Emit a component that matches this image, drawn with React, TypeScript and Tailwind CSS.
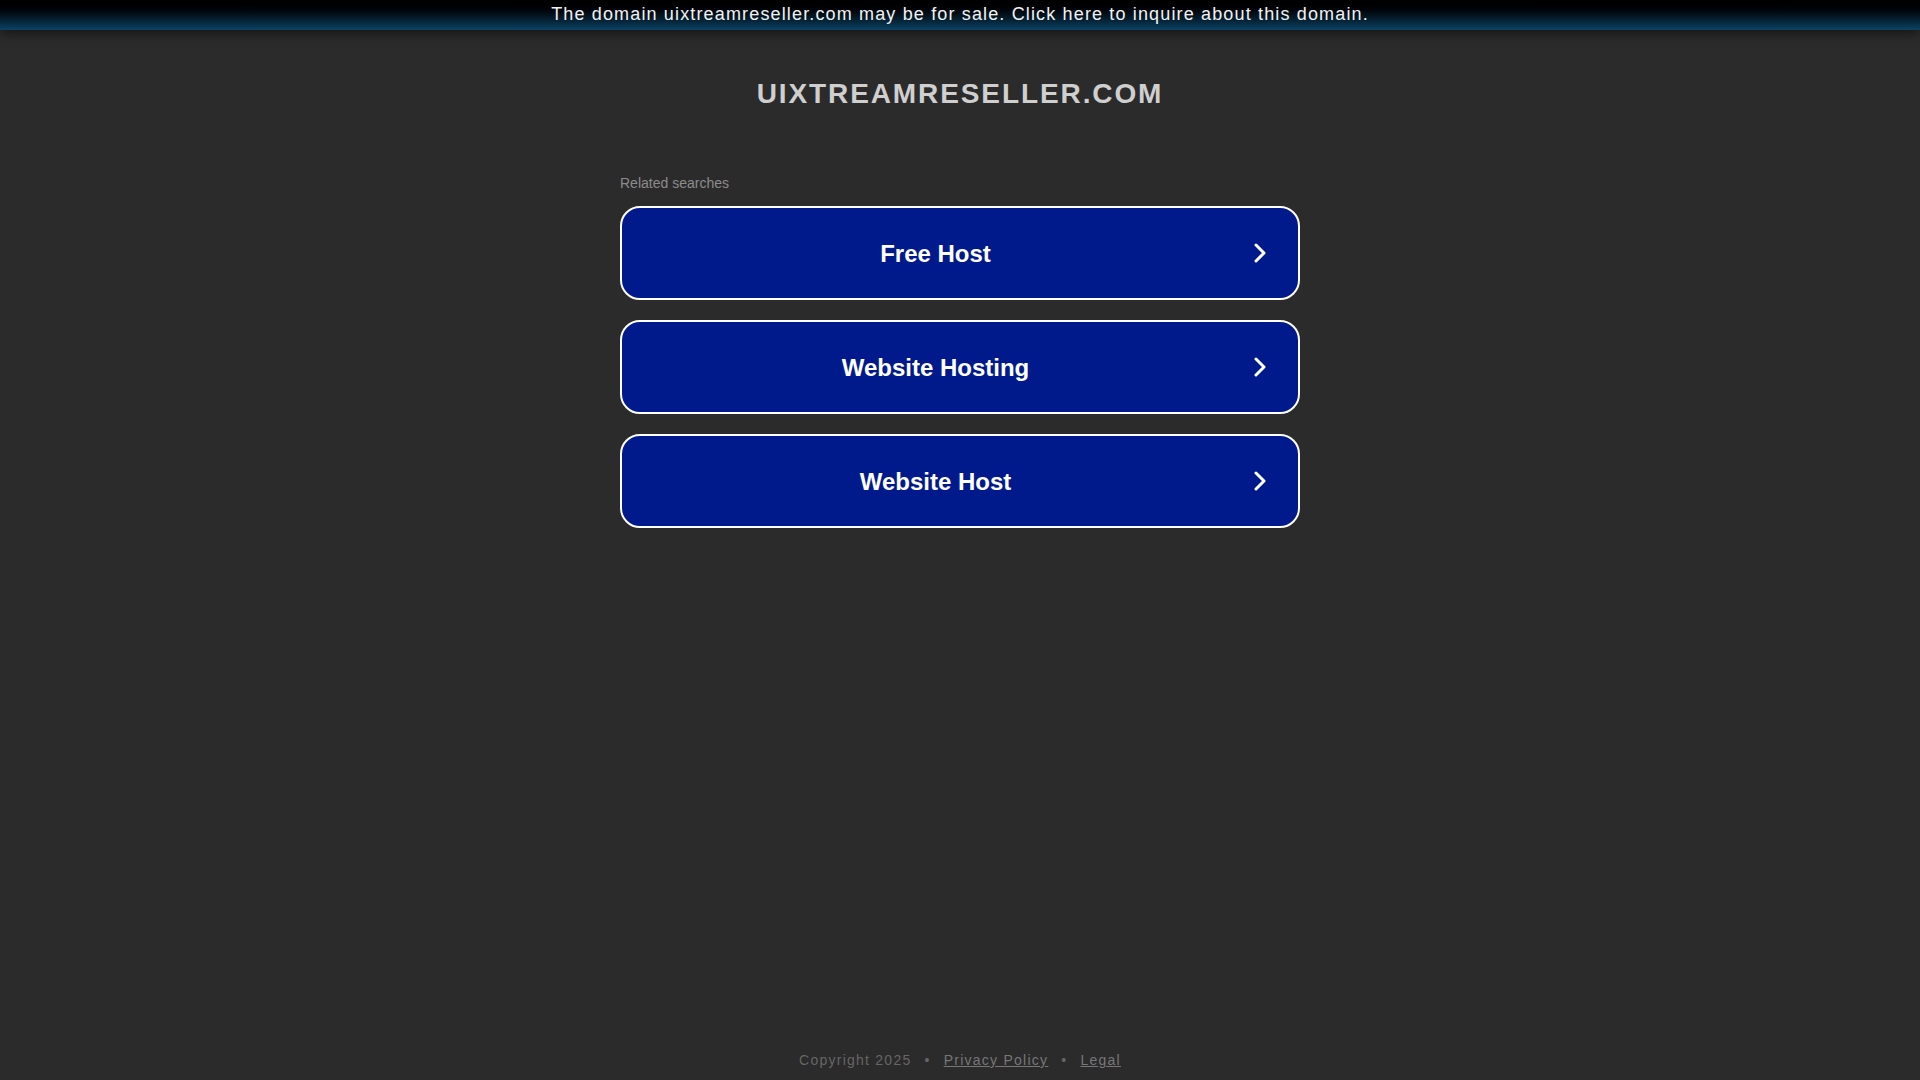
const searches = ["Free Host", "Website Hosting", "Website Host"];

function Chevron() {
  return (
    <svg width="12" height="20" viewBox="0 0 12 20" className="ml-[5px] mr-[32px] shrink-0">
      <polyline points="2,2 10,10 2,18" fill="none" stroke="#ffffff" strokeWidth="3" strokeLinecap="round" strokeLinejoin="round" />
    </svg>
  );
}

export default function App() {
  return (
    <div className="flex min-h-screen flex-col bg-[#2b2b2b] font-['Liberation_Sans',Arial,sans-serif]">
      <div className="relative z-10 h-[30px] bg-gradient-to-b from-[#000000] via-[#03121d] to-[#0a4466] text-center text-[18px] leading-[29px] tracking-[1.15px] text-[#f2f2f2] shadow-[0_3px_12px_rgba(0,0,0,0.55)]">
        <a href="#">The domain uixtreamreseller.com may be for sale. Click here to inquire about this domain.</a>
      </div>

      <h1 className="mt-[47px] text-center text-[28px] font-bold leading-[34px] tracking-[1.9px] text-[#cfcfcf]">
        UIXTREAMRESELLER.COM
      </h1>

      <div className="mx-auto mt-[62px] w-[680px]">
        <div className="text-[14px] leading-[20px] text-[#8c8c8c]">Related searches</div>
        <div className="mt-[13px] flex flex-col gap-[20px]">
          {searches.map((s) => (
            <a
              key={s}
              href="#"
              className="flex h-[94px] items-center rounded-[20px] border-2 border-white bg-[#011a8b] text-white"
            >
              <span className="flex-1 pt-[2px] text-center text-[24px] font-bold">{s}</span>
              <Chevron />
            </a>
          ))}
        </div>
      </div>

      <footer className="mt-auto pb-[10px] text-center text-[14px] leading-[20px] tracking-[1.25px] text-[#666666]">
        <span>Copyright 2025</span>
        <span className="mx-[13px]">•</span>
        <a href="#" className="text-[#777777] underline">Privacy Policy</a>
        <span className="mx-[13px]">•</span>
        <a href="#" className="text-[#777777] underline">Legal</a>
      </footer>
    </div>
  );
}
